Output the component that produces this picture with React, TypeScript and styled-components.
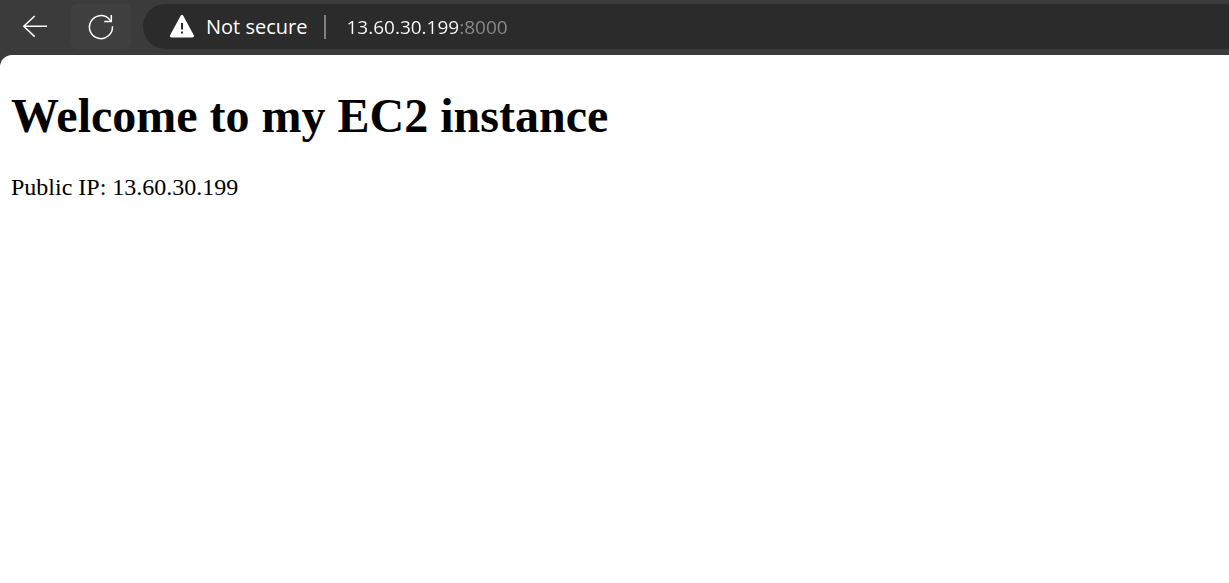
import React, { useState } from "react";
import styled, { createGlobalStyle } from "styled-components";

const GlobalStyle = createGlobalStyle`
  body {
    margin: 0;
    background: #3b3b3b;
  }
  *, *::before, *::after {
    box-sizing: border-box;
  }
`;

const Browser = styled.div`
  display: flex;
  flex-direction: column;
  min-height: 100vh;
`;

const Toolbar = styled.header`
  display: flex;
  align-items: center;
  padding: 4px 0 6px 5px;
  background: #3b3b3b;
  font-family: "Open Sans", "Noto Sans", sans-serif;
`;

const ToolButton = styled.button<{ $active?: boolean }>`
  display: flex;
  align-items: center;
  justify-content: center;
  width: 60px;
  height: 45px;
  margin-right: 6px;
  padding: 0;
  border: 0;
  border-radius: 6px;
  color: #fff;
  background: ${({ $active }) => ($active ? "#404040" : "transparent")};
`;

const AddressBar = styled.form`
  display: flex;
  flex: 1;
  align-items: center;
  height: 45px;
  margin-left: 6px;
  padding-left: 26px;
  border-radius: 23px 0 0 23px;
  background: #2b2b2b;
`;

const SecurityButton = styled.button`
  display: flex;
  align-items: center;
  gap: 11px;
  padding: 0;
  border: 0;
  background: none;
  color: #fff;
  font-family: inherit;
  font-size: 20px;
  line-height: 28px;
`;

const Divider = styled.span`
  width: 2px;
  height: 24px;
  margin: 0 20px 0 17px;
  background: #7f7f7f;
`;

const AddressInput = styled.input`
  flex: 1;
  min-width: 0;
  padding: 0;
  border: 0;
  outline: 0;
  background: linear-gradient(to right, #fff 113px, #8a8a8a 113px);
  background-clip: text;
  -webkit-background-clip: text;
  -webkit-text-fill-color: transparent;
  color: #fff;
  font-family: inherit;
  font-size: 19px;
  line-height: 28px;
`;

const Page = styled.main`
  flex: 1;
  padding: 33px 11px;
  border-top-left-radius: 12px;
  background: #fff;
  color: #000;
  font-family: "Liberation Serif", "Times New Roman", serif;
`;

const Title = styled.h1`
  margin: 0 0 29px;
  font-size: 48px;
  line-height: 56px;
`;

const Info = styled.p`
  margin: 0;
  font-size: 24px;
  line-height: 28px;
`;

const BackIcon = () => (
  <svg width="26" height="24" viewBox="0 0 26 24" fill="none" stroke="currentColor" strokeWidth="1.5" aria-hidden="true">
    <path d="M12.7 1 1.8 11.3l10.9 10.3M1.8 11.3H25" />
  </svg>
);

const ReloadIcon = () => (
  <svg width="26" height="26" viewBox="0 0 26 26" fill="none" stroke="currentColor" strokeWidth="1.5" aria-hidden="true">
    <path d="M24.4 12.2A11.5 11.5 0 1 1 21.3 5.2L23.3 7.4" />
    <path d="M23.3 1V7.6H16.3" />
  </svg>
);

const WarningIcon = () => (
  <svg width="26" height="24" viewBox="0 0 26 24" aria-hidden="true">
    <path
      d="M11.5 .9a1.6 1.6 0 0 1 2.9 0l10.3 19.2a1.6 1.6 0 0 1-1.4 2.4H2.6a1.6 1.6 0 0 1-1.4-2.4z"
      fill="currentColor"
    />
    <path d="M13 8v6.5M13 16.5v2" stroke="#2b2b2b" strokeWidth="2" />
  </svg>
);

export default function App() {
  const [address, setAddress] = useState("13.60.30.199:8000");
  return (
    <>
      <GlobalStyle />
      <Browser>
        <Toolbar>
          <ToolButton type="button" aria-label="Back">
            <BackIcon />
          </ToolButton>
          <ToolButton type="button" aria-label="Reload" $active>
            <ReloadIcon />
          </ToolButton>
          <AddressBar onSubmit={(event) => event.preventDefault()}>
            <SecurityButton type="button">
              <WarningIcon />
              Not secure
            </SecurityButton>
            <Divider />
            <AddressInput
              aria-label="Address"
              spellCheck={false}
              value={address}
              onChange={(event) => setAddress(event.target.value)}
            />
          </AddressBar>
        </Toolbar>
        <Page>
          <Title>Welcome to my EC2 instance</Title>
          <Info>Public IP: 13.60.30.199</Info>
        </Page>
      </Browser>
    </>
  );
}
